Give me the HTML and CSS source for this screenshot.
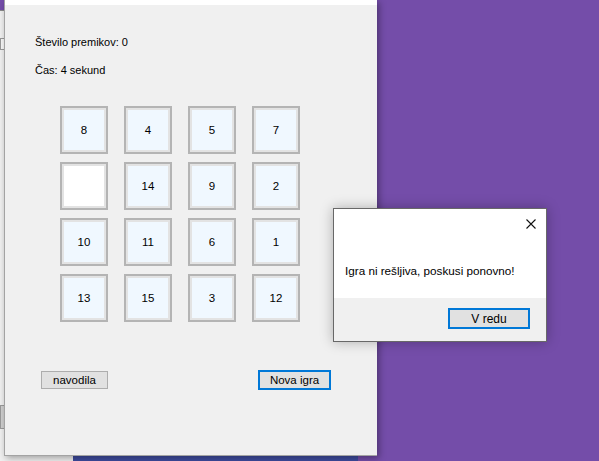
FILE: index.html
```html
<!DOCTYPE html>
<html lang="sl">
<head>
<meta charset="utf-8">
<title>Igra 15</title>
<link rel="stylesheet" href="styles.css">
</head>
<body>
<div class="desktop">
  <div class="back-window">
    <div class="back-field"></div>
    <div class="back-button"></div>
  </div>
  <div class="taskstrip"></div>

  <div class="main-window">
    <div class="titlebar"></div>
    <div class="content">
      <div class="label">Število premikov: 0</div>
      <div class="label label-time">Čas: 4 sekund</div>
      <div class="board">
        <div class="tile">8</div>
        <div class="tile">4</div>
        <div class="tile">5</div>
        <div class="tile">7</div>
        <div class="tile tile-empty"></div>
        <div class="tile">14</div>
        <div class="tile">9</div>
        <div class="tile">2</div>
        <div class="tile">10</div>
        <div class="tile">11</div>
        <div class="tile">6</div>
        <div class="tile">1</div>
        <div class="tile">13</div>
        <div class="tile">15</div>
        <div class="tile">3</div>
        <div class="tile">12</div>
      </div>
      <div class="actions">
        <button class="btn btn-help">navodila</button>
        <button class="btn btn-new">Nova igra</button>
      </div>
    </div>
  </div>

  <div class="dialog">
    <div class="dialog-body">
      <div class="dialog-top">
        <svg class="close-icon" width="10" height="10" viewBox="0 0 10 10">
          <path d="M0.5 0.5 L9.5 9.5 M9.5 0.5 L0.5 9.5" stroke="#111" stroke-width="1.1" fill="none"/>
        </svg>
      </div>
      <div class="dialog-text">Igra ni rešljiva, poskusi ponovno!</div>
    </div>
    <div class="dialog-footer">
      <button class="btn btn-ok">V redu</button>
    </div>
  </div>
</div>
</body>
</html>
```
FILE: styles.css
```css
* { box-sizing: border-box; }

html, body {
  margin: 0;
  padding: 0;
}

body {
  width: 599px;
  height: 461px;
  overflow: hidden;
  font-family: "Liberation Sans", Arial, sans-serif;
  color: #000;
}

.desktop {
  position: relative;
  width: 599px;
  height: 461px;
  background: #744da9;
  overflow: hidden;
}

/* window behind, on the left */
.back-window {
  position: absolute;
  left: 0;
  top: 10px;
  width: 80px;
  height: 451px;
  background: #f0f0f0;
  border-top: 1px solid #8a8a8a;
  padding-top: 27px;
}

.back-field {
  width: 40px;
  height: 12px;
  border: 1px solid #9a9a9a;
  background: #f8f8f8;
}

.back-button {
  margin-top: 355px;
  width: 40px;
  height: 24px;
  border: 1px solid #9a9a9a;
  background: #cfcfcf;
}

.taskstrip {
  position: absolute;
  left: 73px;
  top: 455px;
  width: 285px;
  height: 6px;
  background: #3e4b9e;
}

/* main game window */
.main-window {
  position: absolute;
  left: 4px;
  top: 0;
  width: 373px;
  height: 456px;
  background: #f0f0f0;
  border-left: 1px solid #a3a3a3;
  border-bottom: 1px solid #a3a3a3;
  box-shadow: 2px 2px 7px rgba(0, 0, 0, 0.35);
}

.titlebar {
  height: 5px;
  background: #ffffff;
}

.content {
  padding: 31px 0 0 30px;
}

.label {
  font-size: 11px;
  line-height: 13px;
  height: 13px;
  white-space: nowrap;
}

.label-time {
  margin-top: 15px;
}

.board {
  margin: 29px 0 0 25px;
  display: grid;
  grid-template-columns: repeat(4, 48px);
  grid-auto-rows: 48px;
  column-gap: 16px;
  row-gap: 8px;
}

.tile {
  display: flex;
  align-items: center;
  justify-content: center;
  font-size: 11.5px;
  background: #f0f8ff;
  border: 2px solid #b4b4b4;
  box-shadow: inset 0 0 0 2px #e3e3e3;
}

.tile-empty {
  background: #ffffff;
}

.actions {
  margin: 48px 0 0 6px;
  width: 290px;
  height: 20px;
  display: flex;
  align-items: center;
  justify-content: space-between;
}

.btn {
  font-family: "Liberation Sans", Arial, sans-serif;
  font-size: 11.5px;
  color: #000;
  background: #e1e1e1;
  border: 1px solid #adadad;
  padding: 0;
  margin: 0;
  display: flex;
  align-items: center;
  justify-content: center;
}

.btn-help {
  width: 67px;
  height: 18px;
}

.btn-new {
  width: 73px;
  height: 20px;
  border: 2px solid #0078d7;
}

/* message box */
.dialog {
  position: absolute;
  left: 333px;
  top: 208px;
  width: 214px;
  height: 134px;
  border: 1px solid #686868;
  background: #ffffff;
  box-shadow: 0 0 12px rgba(0, 0, 0, 0.28);
  display: flex;
  flex-direction: column;
}

.dialog-body {
  height: 89px;
  background: #ffffff;
}

.dialog-top {
  height: 30px;
  display: flex;
  justify-content: flex-end;
  padding: 10px 10px 0 0;
}

.close-icon {
  display: block;
}

.dialog-text {
  margin-top: 25px;
  padding-left: 11px;
  font-size: 11.7px;
  line-height: 14px;
  white-space: nowrap;
}

.dialog-footer {
  flex: 1;
  background: #f0f0f0;
  display: flex;
  justify-content: flex-end;
  padding: 10px 16px 0 0;
}

.btn-ok {
  width: 82px;
  height: 21px;
  font-size: 12px;
  border: 2px solid #0078d7;
}
```
